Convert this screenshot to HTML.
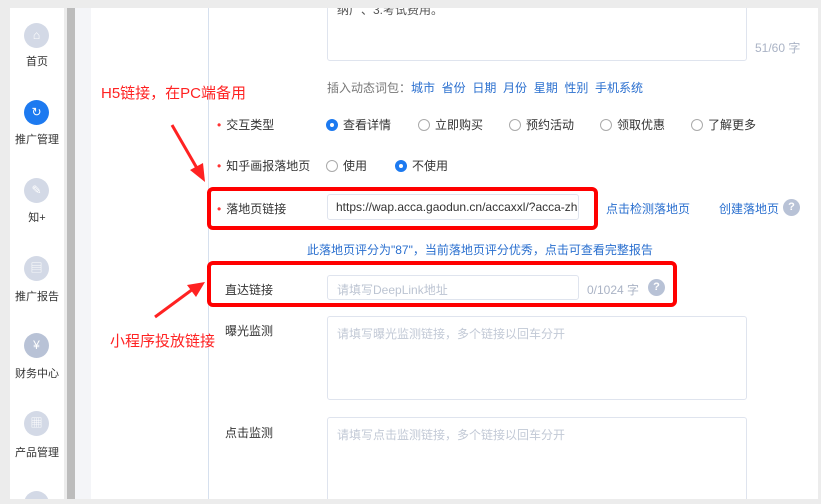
<!DOCTYPE html>
<html><head><meta charset="utf-8"><style>
*{margin:0;padding:0;box-sizing:border-box}
html,body{width:821px;height:504px;overflow:hidden}
body{background:#ececec;font-family:"Liberation Sans","Noto Sans CJK SC",sans-serif;font-size:12px;color:#333;position:relative}
.a{position:absolute}
.side{left:10px;top:8px;width:54px;height:491px;background:#fff}
.ic{position:absolute;left:14px;width:25px;height:25px;border-radius:50%;background:#d3d9e6;color:#fff;font-size:12px;text-align:center;line-height:25px}
.lb{position:absolute;width:54px;text-align:center;font-size:11px;color:#333}
.red{border:4px solid #f00;border-radius:6px}
.inp{border:1px solid #dfe4ee;border-radius:3px;background:#fff}
.blue{color:#2a6fcf}
.gray{color:#aab3c5}
.star{color:#f33;margin-right:5px}
.rad{display:inline-block;width:12px;height:12px;border:1px solid #aaa;border-radius:50%;vertical-align:-2px;margin-right:5px}
.rad.on{border:4px solid #1d7af0}
.q{width:17px;height:17px;border-radius:50%;background:#b8c2d6;color:#fff;text-align:center;line-height:17px;font-size:11px;font-weight:bold}
.ann{color:#f22;font-size:15px}
.ov{background:#ececec;z-index:5;left:0;width:821px}
</style></head><body>
<div class="a side">
<div class="ic" style="top:15px">⌂</div><div class="lb" style="top:45px">首页</div>
<div class="ic" style="top:92px;background:#1d7af0">↻</div><div class="lb" style="top:123px">推广管理</div>
<div class="ic" style="top:170px">✎</div><div class="lb" style="top:201px">知+</div>
<div class="ic" style="top:248px">▤</div><div class="lb" style="top:280px">推广报告</div>
<div class="ic" style="top:325px;background:#b8c2d6">¥</div><div class="lb" style="top:357px">财务中心</div>
<div class="ic" style="top:403px">▦</div><div class="lb" style="top:436px">产品管理</div>
<div class="ic" style="top:483px"></div>
</div>
<div class="a" style="left:67px;top:8px;width:8px;height:491px;background:#bcbcbc"></div>
<div class="a" style="left:75px;top:8px;width:16px;height:491px;background:#f4f5f8"></div>
<div class="a" style="left:91px;top:8px;width:727px;height:491px;background:#fff"></div>
<div class="a" style="left:208px;top:8px;width:1px;height:491px;background:#d6e0ee"></div>

<div class="a inp" style="left:327px;top:-6px;width:420px;height:67px"></div>
<div class="a" style="left:337px;top:1px;color:#555">纳广、3.考试费用。</div>
<div class="a gray" style="left:755px;top:39px">51/60 字</div>
<div class="a" style="left:327px;top:79px;color:#777">插入动态词包：<span class="blue">城市 &nbsp;省份 &nbsp;日期 &nbsp;月份 &nbsp;星期 &nbsp;性别 &nbsp;手机系统</span></div>

<div class="a" style="left:217px;top:116px"><span class="star">•</span>交互类型</div>
<div class="a" style="left:326px;top:116px"><span class="rad on"></span>查看详情</div>
<div class="a" style="left:418px;top:116px"><span class="rad"></span>立即购买</div>
<div class="a" style="left:509px;top:116px"><span class="rad"></span>预约活动</div>
<div class="a" style="left:600px;top:116px"><span class="rad"></span>领取优惠</div>
<div class="a" style="left:691px;top:116px"><span class="rad"></span>了解更多</div>

<div class="a" style="left:217px;top:157px"><span class="star">•</span>知乎画报落地页</div>
<div class="a" style="left:326px;top:157px"><span class="rad"></span>使用</div>
<div class="a" style="left:395px;top:157px"><span class="rad on"></span>不使用</div>

<div class="a red" style="left:207px;top:187px;width:391px;height:43px"></div>
<div class="a" style="left:217px;top:200px"><span class="star">•</span>落地页链接</div>
<div class="a inp" style="left:327px;top:194px;width:252px;height:26px;padding:5px 8px;white-space:nowrap;overflow:hidden;color:#333">https://wap.acca.gaodun.cn/accaxxl/?acca-zhih</div>
<div class="a blue" style="left:606px;top:200px">点击检测落地页</div>
<div class="a blue" style="left:719px;top:200px">创建落地页</div>
<div class="a q" style="left:783px;top:199px">?</div>
<div class="a blue" style="left:307px;top:241px">此落地页评分为"87"，当前落地页评分优秀，点击可查看完整报告</div>

<div class="a red" style="left:207px;top:261px;width:470px;height:46px"></div>
<div class="a" style="left:225px;top:281px">直达链接</div>
<div class="a inp" style="left:327px;top:275px;width:252px;height:25px;padding:5px 9px"><span style="color:#bcc4d2">请填写DeepLink地址</span></div>
<div class="a gray" style="left:587px;top:281px">0/1024 字</div>
<div class="a q" style="left:648px;top:279px">?</div>

<div class="a" style="left:225px;top:322px">曝光监测</div>
<div class="a inp" style="left:327px;top:316px;width:420px;height:84px;padding:8px 9px;color:#c2c9d6">请填写曝光监测链接，多个链接以回车分开</div>
<div class="a" style="left:225px;top:424px">点击监测</div>
<div class="a inp" style="left:327px;top:417px;width:420px;height:90px;padding:8px 9px;color:#c2c9d6">请填写点击监测链接，多个链接以回车分开</div>

<div class="a ann" style="left:101px;top:82px">H5链接，在PC端备用</div>
<div class="a ann" style="left:110px;top:330px">小程序投放链接</div>
<svg class="a" style="left:0;top:0" width="821" height="504">
<line x1="172" y1="125" x2="198" y2="170" stroke="#f22" stroke-width="3"/>
<polygon points="205,182 190,170 203,163" fill="#f22"/>
<line x1="155" y1="317" x2="193" y2="289" stroke="#f22" stroke-width="3"/>
<polygon points="205,282 187,285 196,297" fill="#f22"/>
</svg>
<div class="a ov" style="top:0;height:8px"></div>
<div class="a ov" style="top:499px;height:5px"></div>
</body></html>
